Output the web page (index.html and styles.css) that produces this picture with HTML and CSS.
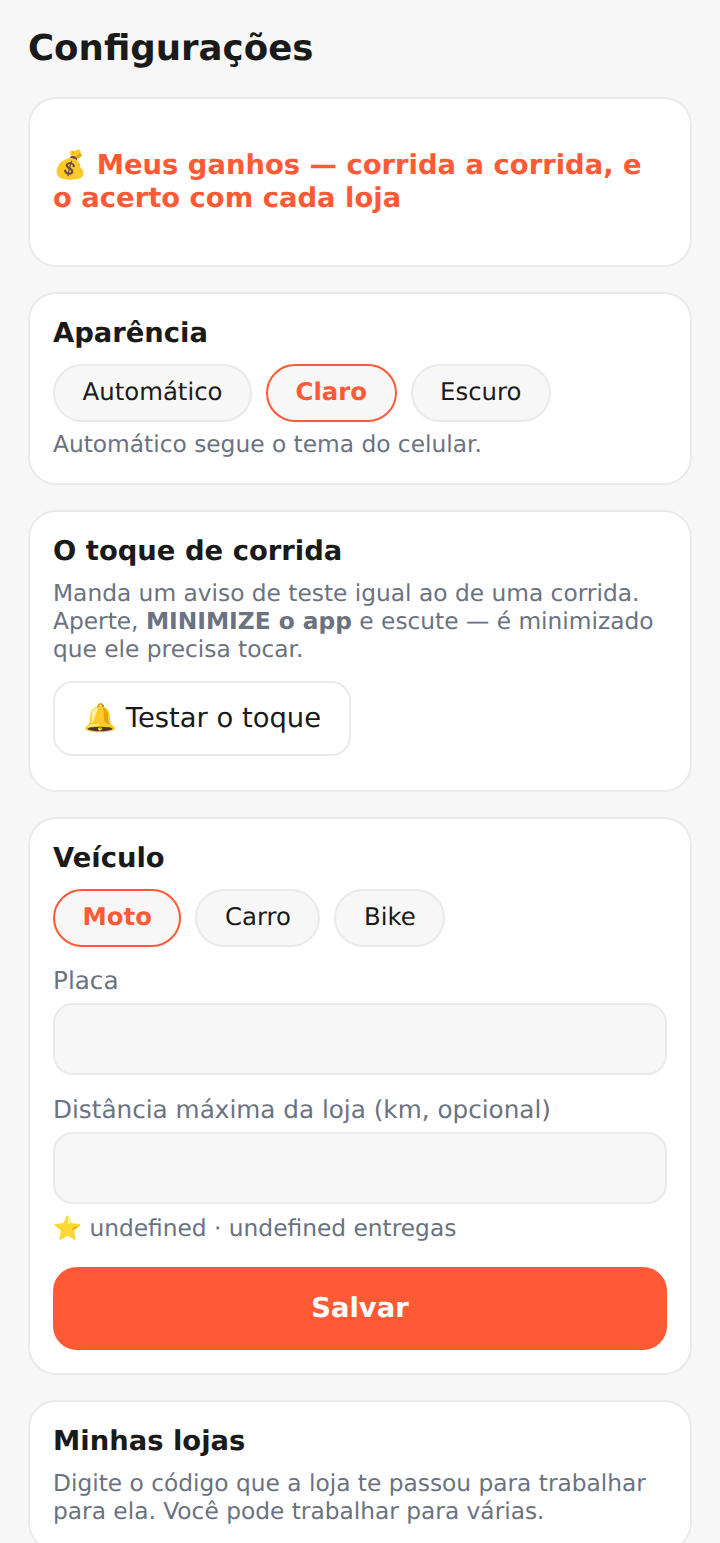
FILE: index.html
```html
<!DOCTYPE html>
<html lang="pt-BR">
<head>
    <meta charset="UTF-8">
    <meta name="viewport" content="width=device-width, initial-scale=1.0">
    <title>Configurações</title>
    <link rel="stylesheet" href="styles.css">
</head>
<body>
    <div class="page">
        <h1>Configurações</h1>

        <section class="card">
            <a class="earnings-link">💰 Meus ganhos — corrida a corrida, e o acerto com cada loja</a>
        </section>

        <section class="card">
            <h2>Aparência</h2>
            <div class="chips">
                <button class="chip">Automático</button>
                <button class="chip active">Claro</button>
                <button class="chip">Escuro</button>
            </div>
            <p class="muted hint">Automático segue o tema do celular.</p>
        </section>

        <section class="card">
            <h2>O toque de corrida</h2>
            <p class="muted">Manda um aviso de teste igual ao de uma corrida. Aperte, <b>MINIMIZE o app</b> e escute — é minimizado que ele precisa tocar.</p>
            <button class="btn-outline">🔔 Testar o toque</button>
        </section>

        <section class="card">
            <h2>Veículo</h2>
            <div class="chips">
                <button class="chip active">Moto</button>
                <button class="chip">Carro</button>
                <button class="chip">Bike</button>
            </div>
            <label class="field">
                <span class="muted field-label">Placa</span>
                <input type="text">
            </label>
            <label class="field">
                <span class="muted field-label">Distância máxima da loja (km, opcional)</span>
                <input type="text">
            </label>
            <p class="muted rating">⭐ undefined · undefined entregas</p>
            <button class="btn-primary">Salvar</button>
        </section>

        <section class="card">
            <h2>Minhas lojas</h2>
            <p class="muted">Digite o código que a loja te passou para trabalhar para ela. Você pode trabalhar para várias.</p>
        </section>
    </div>
</body>
</html>
```

FILE: styles.css
```css
* {
    margin: 0;
    padding: 0;
    box-sizing: border-box;
}

body {
    font-family: "DejaVu Sans", sans-serif;
    background: #f7f7f7;
    color: #1a1a1a;
    text-rendering: geometricPrecision;
}

.page {
    padding: 28px;
    display: flex;
    flex-direction: column;
    gap: 25px;
}

h1 {
    font-size: 35.6px;
    line-height: 42px;
    font-weight: 700;
    margin-bottom: 2px;
}

h2 {
    font-size: 27.4px;
    line-height: 34px;
    font-weight: 700;
    margin-bottom: 11px;
}

.card {
    background: #fff;
    border: 2px solid #eaeaea;
    border-radius: 28px;
    padding: 23px;
}

.earnings-link {
    display: block;
    padding: 27px 0;
    color: #ff5a36;
    font-size: 27.4px;
    line-height: 33px;
    font-weight: 700;
}

.chips {
    display: flex;
    gap: 14px;
    margin-top: 13px;
}

.chip {
    font-family: inherit;
    text-rendering: inherit;
    font-size: 24.4px;
    height: 58px;
    padding: 0 27.5px 4px;
    color: #1a1a1a;
    background: #f7f7f7;
    border: 2px solid #eaeaea;
    border-radius: 29px;
}

.chip.active {
    color: #ff5a36;
    font-weight: 700;
    border-color: #ff5a36;
}

.muted {
    color: #6b7280;
    font-size: 23.3px;
    line-height: 28px;
}

.hint {
    margin-top: 9px;
    margin-bottom: 1px;
}

.btn-outline {
    display: block;
    font-family: inherit;
    text-rendering: inherit;
    font-size: 27.4px;
    height: 75px;
    padding: 0 28px 2px;
    margin: 17px 0 11px;
    color: #1a1a1a;
    background: #fff;
    border: 2px solid #eaeaea;
    border-radius: 20px;
}

.field {
    display: block;
    margin-top: 20px;
}

.field + .field {
    margin-top: 21px;
}

.field-label {
    display: block;
    font-size: 24.7px;
}

.field input {
    display: block;
    width: 100%;
    height: 72px;
    margin-top: 8px;
    background: #f7f7f7;
    border: 2px solid #eaeaea;
    border-radius: 20px;
}

.rating {
    margin-top: 11px;
}

.btn-primary {
    display: block;
    width: 100%;
    font-family: inherit;
    text-rendering: inherit;
    font-size: 27.4px;
    font-weight: 700;
    height: 83px;
    margin-top: 24px;
    color: #fff;
    background: #ff5a36;
    border: none;
    border-radius: 24px;
}
```
